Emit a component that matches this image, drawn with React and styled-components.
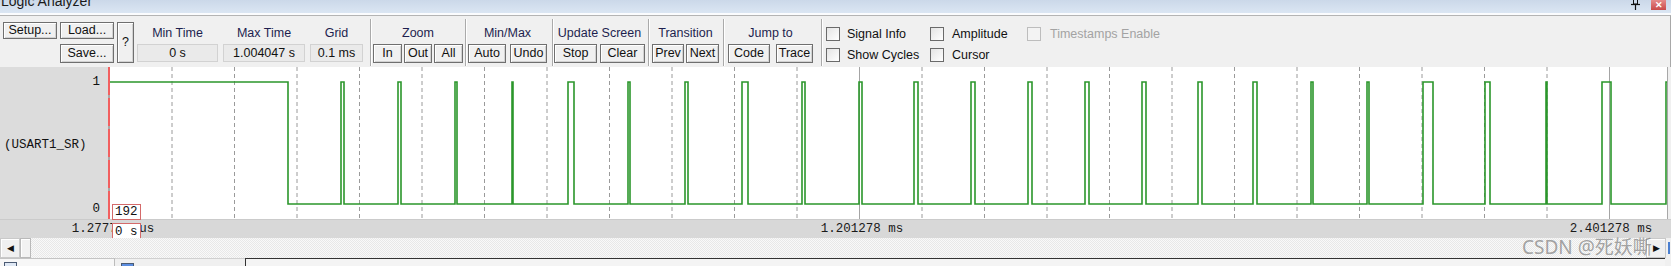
import React from 'react';
import styled, { createGlobalStyle } from 'styled-components';

const Global = createGlobalStyle`
  html, body { margin: 0; padding: 0; background: #f0f0f0; }
  body {
    width: 1671px; height: 266px; overflow: hidden;
    font-family: "Liberation Sans", Arial, sans-serif;
  }
  * { box-sizing: border-box; }
`;

const Window = styled.div`
  position: relative;
  width: 1671px;
  height: 266px;
  display: flex;
  flex-direction: column;
  overflow: hidden;
  background: #f0f0f0;
`;

/* ---------- title bar ---------- */
const TitleBar = styled.div`
  flex: none;
  height: 15px;
  display: flex;
  align-items: flex-start;
  overflow: hidden;
  background: linear-gradient(#cbd8e9, #dbe6f3);
  border-bottom: 2px solid #fbfcfe;
  padding-left: 1px;
`;
const TitleText = styled.span`
  flex: 1;
  font-size: 14px;
  line-height: 14px;
  margin-top: -6px;
  color: #1a1a1a;
`;
const PinIcon = styled.svg`
  flex: none;
  width: 9px;
  height: 10px;
  margin-right: 11px;
`;
const CloseBtn = styled.div`
  flex: none;
  width: 15px;
  height: 10px;
  margin-right: 5px;
  background: linear-gradient(#e58a8a, #c94a4a);
  display: flex;
  align-items: center;
  justify-content: center;
  color: #fff;
  font-size: 9px;
  font-weight: bold;
  line-height: 10px;
`;

/* ---------- toolbar ---------- */
const Toolbar = styled.div`
  flex: none;
  height: 52px;
  display: flex;
  align-items: flex-start;
  padding: 6px 0 0 3px;
  border-top: 1px solid #b4b4b4;
  border-right: 1px solid #a8a8a8;
  background: #f0f0f0;
`;
const ButtonCluster = styled.div`
  display: grid;
  grid-template-columns: 54px 54px 17px;
  grid-template-rows: 17px 19px;
  column-gap: 3px;
  row-gap: 5px;
`;
const Btn = styled.div`
  width: ${p => (p.$w ? `${p.$w}px` : 'auto')};
  height: ${p => (p.$h ? `${p.$h}px` : '19px')};
  grid-column: ${p => p.$col || 'auto'};
  grid-row: ${p => p.$row || 'auto'};
  border: 1px solid #6f6f6f;
  box-shadow: inset 1px 1px 0 #ffffff, inset -1px -1px 0 #d2d2d2;
  background: #f0f0f0;
  display: flex;
  align-items: center;
  justify-content: center;
  font-size: 12.5px;
  line-height: 1;
  color: #111;
  white-space: nowrap;
`;
const Field = styled.div`
  display: flex;
  flex-direction: column;
  width: ${p => p.$w}px;
  margin-left: ${p => p.$ml}px;
`;
const GroupLabel = styled.div`
  height: 22px;
  line-height: 22px;
  text-align: center;
  font-size: 12.5px;
  color: #1d1f4f;
  white-space: nowrap;
  padding-right: ${p => p.$shift || 0}px;
`;
const ValueBox = styled.div`
  height: 18px;
  border: 1px solid #d2d2d2;
  background: #eaeaea;
  text-align: center;
  font-size: 12.5px;
  line-height: 16px;
  color: #111;
  white-space: nowrap;
`;
const Separator = styled.div`
  flex: none;
  width: 2px;
  height: 47px;
  margin-top: -3px;
  margin-left: ${p => p.$ml}px;
  border-left: 1px solid #aaaaaa;
  border-right: 1px solid #ffffff;
`;
const Group = styled.div`
  display: flex;
  flex-direction: column;
  margin-left: ${p => p.$ml}px;
`;
const BtnRow = styled.div`
  display: flex;
  gap: ${p => p.$gap}px;
`;
const CheckGrid = styled.div`
  margin-left: ${p => p.$ml}px;
  margin-top: 5px;
  display: grid;
  grid-template-columns: 104px 97px auto;
  grid-template-rows: 14px 14px;
  row-gap: 7px;
`;
const CheckItem = styled.label`
  display: flex;
  align-items: center;
  gap: ${p => p.$gap || 7}px;
  font-size: 12.5px;
  color: ${p => (p.$disabled ? '#a3a3a3' : '#111')};
  white-space: nowrap;
`;
const CheckBox = styled.span`
  flex: none;
  width: 14px;
  height: 14px;
  border: 1px solid ${p => (p.$disabled ? '#bdbdbd' : '#6a6a6a')};
  background: ${p => (p.$disabled ? '#f3f3f3' : 'linear-gradient(135deg, #e4e4e4, #ffffff)')};
`;

/* ---------- chart ---------- */
const Chart = styled.div`
  position: relative;
  flex: none;
  height: 171px;
  overflow: hidden;
  display: flex;
  flex-direction: column;
`;
const MainRow = styled.div`
  height: 152px;
  display: flex;
`;
const LabelPanel = styled.div`
  width: 108px;
  flex: none;
  background: #dcdcdc;
  display: flex;
  flex-direction: column;
  padding-top: 8px;
  font-family: "Liberation Mono", "Courier New", monospace;
  font-size: 12.5px;
  line-height: 14px;
  color: #111;
`;
const Level = styled.div`
  text-align: right;
  padding-right: 8px;
  margin-top: ${p => p.$mt || 0}px;
`;
const SignalName = styled.div`
  padding-left: 4px;
  margin-top: 49px;
`;
const CursorBar = styled.div`
  width: 2px;
  flex: none;
  background: repeating-linear-gradient(to bottom, #f25f5f 0 28px, #a9a9a9 28px 31px);
`;
const Plot = styled.div`
  flex: 1;
  background: #ffffff;
`;
const RightEdge = styled.div`
  width: 4px;
  flex: none;
  background: #f0f0f0;
  border-left: 1px solid #a8a8a8;
`;
const TimeAxis = styled.div`
  position: relative;
  height: 19px;
  background: #d8d8d8;
  border-top: 1px solid #cbcbcb;
  font-family: "Liberation Mono", "Courier New", monospace;
  font-size: 12.5px;
  color: #1a1a1a;
`;
const AxisLabel = styled.span`
  position: absolute;
  top: 0;
  line-height: 18px;
  transform: translateX(-50%);
  white-space: nowrap;
`;
const Badge = styled.div`
  position: absolute;
  left: 112px;
  top: ${p => p.$top}px;
  width: 29px;
  height: ${p => p.$h}px;
  border: 1px solid #d46a6a;
  background: #fff;
  font-family: "Liberation Mono", "Courier New", monospace;
  font-size: 12.5px;
  line-height: ${p => p.$h - 2}px;
  padding-left: 2px;
  color: #111;
  white-space: pre;
`;

/* ---------- scrollbar ---------- */
const Scrollbar = styled.div`
  flex: none;
  height: 20px;
  display: flex;
`;
const ScrollBtn = styled.div`
  width: 20px;
  flex: none;
  background: #f0f0f0;
  border: 1px solid #c9c9c9;
  box-shadow: inset 1px 1px 0 #fff;
  display: flex;
  align-items: center;
  justify-content: center;
  font-size: 9px;
  color: #111;
`;
const Thumb = styled.div`
  width: 11px;
  flex: none;
  background: #f2f2f2;
  border: 1px solid #b9b9b9;
  box-shadow: inset 1px 1px 0 #fff;
`;
const Track = styled.div`
  flex: 1;
  background: conic-gradient(#e8e8e8 25%, #f9f9f9 0 50%, #e8e8e8 0 75%, #f9f9f9 0) 0 0 / 2px 2px;
`;
const EndCap = styled.div`
  width: 5px;
  flex: none;
  background: #f0f0f0;
  display: flex;
  justify-content: center;
  &::after {
    content: '';
    width: 2px;
    margin: 4px 0;
    background: #4a7fd0;
  }
`;
const Watermark = styled.div`
  position: absolute;
  left: 1522px;
  top: 235px;
  font-family: "Noto Sans", "Noto Sans CJK SC", sans-serif;
  font-size: 19px;
  line-height: 24px;
  color: rgba(110, 110, 110, 0.62);
  white-space: nowrap;
  pointer-events: none;
`;

/* ---------- bottom tabs ---------- */
const BottomStrip = styled.div`
  flex: 1;
  display: flex;
  background: #f0f0f0;
`;
const TabA = styled.div`
  width: 115px;
  flex: none;
  background: #f7f7f7;
  border-top: 1px solid #c4c4c4;
  border-right: 1px solid #bcbcbc;
  padding: 3px 0 0 4px;
`;
const TinyIcon = styled.div`
  width: 13px;
  height: 8px;
  border: 1px solid #4b5b74;
  background: ${p => p.$fill || '#dfe8f4'};
`;
const TabB = styled.div`
  width: 130px;
  flex: none;
  padding: 4px 0 0 6px;
  border-top: 1px solid #d0d0d0;
`;
const Pane = styled.div`
  flex: 1;
  margin-right: 6px;
  border-top: 1px solid #333;
  border-left: 1px solid #333;
  background: #f4f4f4;
`;

/* ---------- data ---------- */
const pulses = [
  [341, 344], [398, 401], [455, 457], [512, 513], [568, 574], [628, 630],
  [685, 688], [742, 748], [802, 805], [859, 862], [914, 918], [971, 975],
  [1028, 1032], [1085, 1089], [1142, 1146], [1198, 1202], [1253, 1257],
  [1311, 1313], [1367, 1369], [1423, 1433], [1485, 1490], [1546, 1547],
  [1602, 1611],
];
const HI = 82;
const LO = 204;

function wavePath() {
  let d = `M110 ${HI} H288 V${LO}`;
  for (const [a, b] of pulses) d += ` H${a} V${HI} H${b} V${LO}`;
  d += ` H1666 V${HI} H1668`;
  return d;
}

const gridXs = [];
for (let k = 0; 172 + 62.5 * k < 1667; k++) gridXs.push({ x: 172 + 62.5 * k, solid: k === 11 || k === 23 });

const axisLabels = [
  { x: 113, text: '1.277778 us' },
  { x: 862, text: '1.201278 ms' },
  { x: 1611, text: '2.401278 ms' },
];

export default function App() {
  return (
    <Window>
      <Global />
      <TitleBar>
        <TitleText>Logic Analyzer</TitleText>
        <PinIcon viewBox="0 0 9 10">
          <rect x="2.5" y="-2" width="4" height="6" fill="none" stroke="#111" strokeWidth="1" />
          <line x1="0" y1="4.5" x2="9" y2="4.5" stroke="#111" strokeWidth="1.2" />
          <line x1="4.5" y1="4.5" x2="4.5" y2="10" stroke="#111" strokeWidth="1.2" />
        </PinIcon>
        <CloseBtn>✕</CloseBtn>
      </TitleBar>

      <Toolbar>
        <ButtonCluster>
          <Btn $h={17} $col="1" $row="1">Setup...</Btn>
          <Btn $h={17} $col="2" $row="1">Load...</Btn>
          <Btn $col="2" $row="2">Save...</Btn>
          <Btn $h={41} $col="3" $row="1 / 3">?</Btn>
        </ButtonCluster>

        <Field $w={81} $ml={3}>
          <GroupLabel>Min Time</GroupLabel>
          <ValueBox>0 s</ValueBox>
        </Field>
        <Field $w={82} $ml={5}>
          <GroupLabel>Max Time</GroupLabel>
          <ValueBox>1.004047 s</ValueBox>
        </Field>
        <Field $w={53} $ml={5}>
          <GroupLabel>Grid</GroupLabel>
          <ValueBox>0.1 ms</ValueBox>
        </Field>

        <Separator $ml={7} />
        <Group $ml={1}>
          <GroupLabel>Zoom</GroupLabel>
          <BtnRow $gap={2}>
            <Btn $w={29}>In</Btn>
            <Btn $w={28}>Out</Btn>
            <Btn $w={29}>All</Btn>
          </BtnRow>
        </Group>

        <Separator $ml={2} />
        <Group $ml={1}>
          <GroupLabel>Min/Max</GroupLabel>
          <BtnRow $gap={4}>
            <Btn $w={38}>Auto</Btn>
            <Btn $w={37}>Undo</Btn>
          </BtnRow>
        </Group>

        <Separator $ml={5} />
        <Group $ml={0}>
          <GroupLabel>Update Screen</GroupLabel>
          <BtnRow $gap={3}>
            <Btn $w={43}>Stop</Btn>
            <Btn $w={45}>Clear</Btn>
          </BtnRow>
        </Group>

        <Separator $ml={3} />
        <Group $ml={2}>
          <GroupLabel>Transition</GroupLabel>
          <BtnRow $gap={2}>
            <Btn $w={32}>Prev</Btn>
            <Btn $w={33}>Next</Btn>
          </BtnRow>
        </Group>

        <Separator $ml={4} />
        <Group $ml={3}>
          <GroupLabel $shift={-12}>Jump to</GroupLabel>
          <BtnRow $gap={6}>
            <Btn $w={42}>Code</Btn>
            <Btn $w={37}>Trace</Btn>
          </BtnRow>
        </Group>

        <Separator $ml={8} />
        <CheckGrid $ml={3}>
          <CheckItem><CheckBox />Signal Info</CheckItem>
          <CheckItem $gap={8}><CheckBox />Amplitude</CheckItem>
          <CheckItem $gap={9} $disabled><CheckBox $disabled />Timestamps Enable</CheckItem>
          <CheckItem><CheckBox />Show Cycles</CheckItem>
          <CheckItem $gap={8}><CheckBox />Cursor</CheckItem>
        </CheckGrid>
      </Toolbar>

      <Chart>
        <MainRow>
          <LabelPanel>
            <Level>1</Level>
            <SignalName>(USART1_SR)</SignalName>
            <Level $mt={50}>0</Level>
          </LabelPanel>
          <CursorBar />
          <Plot>
            <svg width="1557" height="152" viewBox="110 67 1557 152" style={{ display: 'block' }}>
              {gridXs.map(g => (
                <line
                  key={g.x}
                  x1={g.x}
                  x2={g.x}
                  y1={67}
                  y2={219}
                  stroke={g.solid ? '#a4a4a4' : '#9a9a9a'}
                  strokeWidth="1"
                  strokeDasharray={g.solid ? undefined : '4 3'}
                />
              ))}
              <path d={wavePath()} fill="none" stroke="#2b962b" strokeWidth="1.6" strokeLinejoin="miter" />
            </svg>
          </Plot>
          <RightEdge />
        </MainRow>
        <TimeAxis>
          {axisLabels.map(l => (
            <AxisLabel key={l.text} style={{ left: `${l.x}px` }}>{l.text}</AxisLabel>
          ))}
        </TimeAxis>
        <Badge $top={137} $h={16}>192</Badge>
        <Badge $top={156} $h={18}>0 s</Badge>
      </Chart>

      <Scrollbar>
        <ScrollBtn>◀</ScrollBtn>
        <Thumb />
        <Track />
        <ScrollBtn>▶</ScrollBtn>
        <EndCap />
      </Scrollbar>

      <BottomStrip>
        <TabA><TinyIcon /></TabA>
        <TabB><TinyIcon $fill="#5b8de0" /></TabB>
        <Pane />
      </BottomStrip>

      <Watermark>CSDN @死妖嘶</Watermark>
    </Window>
  );
}
